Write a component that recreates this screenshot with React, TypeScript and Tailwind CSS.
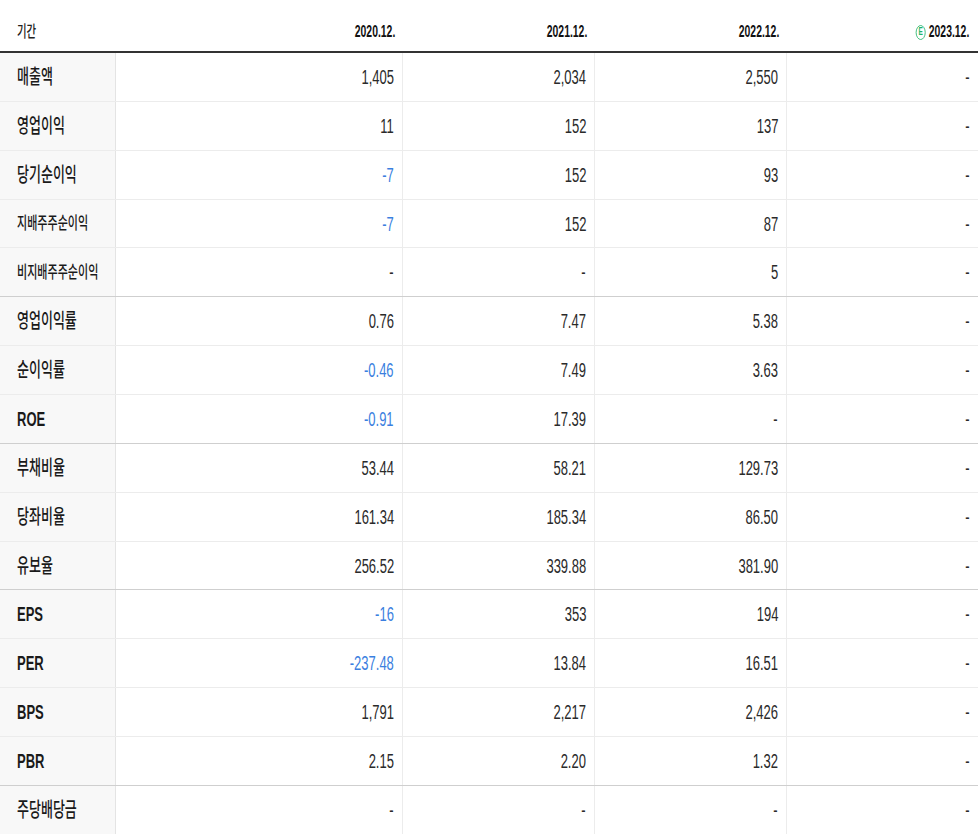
const FONT = "font-['Liberation_Sans','Noto_Sans_CJK_KR',sans-serif]";

type Row = {
  label: string;
  small?: boolean;
  latin?: boolean;
  values: string[];
  groupEnd?: boolean;
};

const rows: Row[] = [
  { label: '매출액', values: ['1,405', '2,034', '2,550', '-'] },
  { label: '영업이익', values: ['11', '152', '137', '-'] },
  { label: '당기순이익', values: ['-7', '152', '93', '-'] },
  { label: '지배주주순이익', small: true, values: ['-7', '152', '87', '-'] },
  { label: '비지배주주순이익', small: true, values: ['-', '-', '5', '-'], groupEnd: true },
  { label: '영업이익률', values: ['0.76', '7.47', '5.38', '-'] },
  { label: '순이익률', values: ['-0.46', '7.49', '3.63', '-'] },
  { label: 'ROE', latin: true, values: ['-0.91', '17.39', '-', '-'], groupEnd: true },
  { label: '부채비율', values: ['53.44', '58.21', '129.73', '-'] },
  { label: '당좌비율', values: ['161.34', '185.34', '86.50', '-'] },
  { label: '유보율', values: ['256.52', '339.88', '381.90', '-'], groupEnd: true },
  { label: 'EPS', latin: true, values: ['-16', '353', '194', '-'] },
  { label: 'PER', latin: true, values: ['-237.48', '13.84', '16.51', '-'] },
  { label: 'BPS', latin: true, values: ['1,791', '2,217', '2,426', '-'] },
  { label: 'PBR', latin: true, values: ['2.15', '2.20', '1.32', '-'], groupEnd: true },
  { label: '주당배당금', values: ['-', '-', '-', '-'] },
];

const years = ['2020.12.', '2021.12.', '2022.12.'];

const cols = 'grid grid-cols-[116px_287px_192px_192px_1fr]';

const isNegative = (v: string) => v.startsWith('-') && v.length > 1;

const App = () => {
  return (
    <div className={`${FONT} w-[978px] h-[834px] overflow-hidden bg-white text-[#222]`}>
      <div className={`${cols} h-[53px] border-b-2 border-[#333]`}>
        <div className="flex items-center pt-[13px] pl-[17px]">
          <span className="inline-block scale-x-[0.65] origin-left whitespace-nowrap text-[16px] font-medium text-[#222]">
            기간
          </span>
        </div>
        {years.map((y) => (
          <div key={y} className="flex items-center justify-end pt-[13px] pr-[8px]">
            <span className="inline-block scale-x-[0.65] origin-right whitespace-nowrap text-[16px] font-bold text-[#111]">
              {y}
            </span>
          </div>
        ))}
        <div className="flex items-center justify-end pt-[13px] pr-[9px]">
          <span className="inline-flex items-center gap-[5px] scale-x-[0.65] origin-right whitespace-nowrap text-[16px] font-bold text-[#111]">
            <span className="inline-flex items-center justify-center w-[15px] h-[15px] rounded-full border-[1.5px] border-[#1fb36a] text-[10px] font-bold leading-none text-[#1fb36a]">
              E
            </span>
            2023.12.
          </span>
        </div>
      </div>

      {rows.map((r) => (
        <div
          key={r.label}
          className={`${cols} h-[48.87px] border-b ${r.groupEnd ? 'border-[#cfcfcf]' : 'border-[#ececec]'}`}
        >
          <div className="flex items-center pl-[17px] bg-[#f8f8f8] border-r border-[#e4e4e4]">
            <span
              className={`inline-block scale-x-[0.65] origin-left whitespace-nowrap text-[#1a1a1a] ${
                r.small ? 'text-[17px] font-medium' : r.latin ? 'text-[20px] font-bold' : 'text-[20px] font-medium'
              }`}
            >
              {r.label}
            </span>
          </div>
          {r.values.map((v, i) => (
            <div
              key={i}
              className={`flex items-center justify-end pr-[8px] ${i < 3 ? 'border-r border-[#ececec]' : ''}`}
            >
              <span
                className={`inline-block scale-x-[0.65] origin-right whitespace-nowrap text-[20px] ${
                  isNegative(v) ? 'text-[#3b7fe0]' : 'text-[#2a2a2a]'
                }`}
              >
                {v}
              </span>
            </div>
          ))}
        </div>
      ))}
    </div>
  );
};

export default App;
